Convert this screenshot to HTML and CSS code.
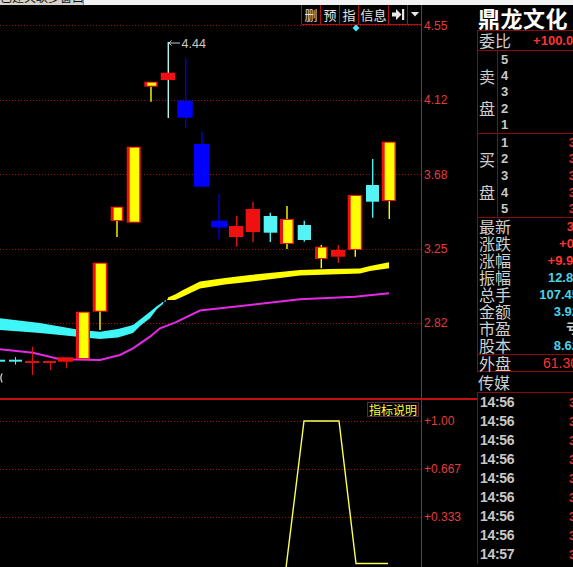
FILE: index.html
```html
<!DOCTYPE html>
<html lang="zh-CN">
<head>
<meta charset="utf-8">
<title>鼎龙文化</title>
<link rel="stylesheet" href="styles.css">
</head>
<body>
<div class="topstrip">
  <div class="tab"><span>已建关联多窗口</span></div>
</div>
<div class="main">
  <div class="chartcol">
    <div class="pricearea">
      <div class="plot">
        <svg class="canvas" width="421" height="393" viewBox="0 5 421 393" xmlns="http://www.w3.org/2000/svg">
          <g class="grid">
            <line x1="0" y1="25.5" x2="421" y2="25.5"/>
            <line x1="0" y1="100.5" x2="421" y2="100.5"/>
            <line x1="0" y1="174.5" x2="421" y2="174.5"/>
            <line x1="0" y1="249.5" x2="421" y2="249.5"/>
            <line x1="0" y1="323.5" x2="421" y2="323.5"/>
          </g>
          <!-- moving averages -->
          <polygon fill="#3ff6f6" points="0,318.3 40,323 80,330 100,331.7 118,329 133,325 142,318 150,311.7 157,306 163,302 163,304 157,309 150,318.3 140,326 133,333 118,337.5 100,339 80,337 40,333 0,330"/>
          <polyline fill="none" stroke="#3ff6f6" stroke-width="1.2" stroke-dasharray="1.5 1.5" points="162,303 170,298"/>
          <polygon fill="#ffff00" points="168,297.5 175,294.5 183,290 200,281.5 225,278 250,275 300,270 330,269 360,268.5 370,266 389,262.3 389,268.3 370,271 360,273.5 330,274.5 300,275.5 250,281.7 225,284.5 200,288.5 183,296.5 175,300 168,300"/>
          <polyline fill="none" stroke="#e52ae5" stroke-width="2" points="0,349.3 33,352.7 60,359.3 100,360 120,355 133,348.3 150,336.7 160,328.3 175,322.7 200,310.5 250,305 300,299.3 355,296.7 389,293.3"/>
          <!-- early small candles -->
          <g stroke-width="2">
            <line x1="0" y1="360.7" x2="5" y2="360.7" stroke="#4af0f0"/>
            <line x1="9" y1="360.7" x2="22" y2="360.7" stroke="#4af0f0"/>
            <line x1="15.5" y1="357" x2="15.5" y2="364.5" stroke="#4af0f0" stroke-width="1"/>
            <line x1="25" y1="362" x2="39" y2="362" stroke="#e01010"/>
            <line x1="32.5" y1="346.7" x2="32.5" y2="375" stroke="#e01010" stroke-width="1"/>
            <line x1="43" y1="362" x2="56" y2="362" stroke="#e01010"/>
            <line x1="50.5" y1="362" x2="50.5" y2="370" stroke="#e01010" stroke-width="1"/>
            <line x1="66.5" y1="361" x2="66.5" y2="368.3" stroke="#e01010" stroke-width="1"/>
          </g>
          <rect x="58" y="357.3" width="15" height="4.4" fill="#f01010"/>
          <path d="M2.2 373.5 Q-0.5 378 2.2 382.5" fill="none" stroke="#d8d8d8" stroke-width="1.2"/>
          <!-- wicks -->
          <g stroke-width="1.4">
            <line x1="100" y1="311" x2="100" y2="330" stroke="#ffff00"/>
            <line x1="117" y1="221" x2="117" y2="237" stroke="#ffff00"/>
            <line x1="151" y1="86.7" x2="151" y2="101.7" stroke="#ffff00"/>
            <line x1="168.3" y1="42" x2="168.3" y2="118" stroke="#b0f4f4"/>
            <line x1="185.7" y1="58" x2="185.7" y2="128" stroke="#0000d8"/>
            <line x1="202" y1="131.7" x2="202" y2="144" stroke="#0000d8"/>
            <line x1="219" y1="194" x2="219" y2="239.3" stroke="#0000d8"/>
            <line x1="236.7" y1="216" x2="236.7" y2="246.7" stroke="#e01010"/>
            <line x1="253" y1="201.7" x2="253" y2="242.3" stroke="#e01010"/>
            <line x1="270.3" y1="212.7" x2="270.3" y2="242" stroke="#4af0f0"/>
            <line x1="287" y1="206" x2="287" y2="249" stroke="#ffff00"/>
            <line x1="304.3" y1="220.7" x2="304.3" y2="241.7" stroke="#4af0f0"/>
            <line x1="321.3" y1="245" x2="321.3" y2="268.3" stroke="#ffff00"/>
            <line x1="338.3" y1="245" x2="338.3" y2="262.7" stroke="#e01010"/>
            <line x1="355.3" y1="250" x2="355.3" y2="256.7" stroke="#ffff00"/>
            <line x1="372.7" y1="159" x2="372.7" y2="217.7" stroke="#4af0f0"/>
            <line x1="389.3" y1="201" x2="389.3" y2="219" stroke="#ffff00"/>
          </g>
          <!-- rising candles: red frame, yellow fill -->
          <g class="up">
            <rect x="76" y="311.7" width="14" height="47.3"/>
            <rect x="92.7" y="262.7" width="14.6" height="49"/>
            <rect x="110.7" y="206.7" width="12.6" height="14.3"/>
            <rect x="126.7" y="146.7" width="14" height="76"/>
            <rect x="144.3" y="81.7" width="13.4" height="5"/>
            <rect x="280" y="219" width="14" height="25"/>
            <rect x="315" y="246.7" width="12.7" height="12.3"/>
            <rect x="347.7" y="195" width="14.6" height="55"/>
            <rect x="381.7" y="141.7" width="14.3" height="59.3"/>
          </g>
          <g class="upfill">
            <rect x="79" y="312.7" width="9.5" height="45.3"/>
            <rect x="95.7" y="263.7" width="10.1" height="47"/>
            <rect x="113.7" y="207.7" width="8.1" height="12.3"/>
            <rect x="129.7" y="147.7" width="9.5" height="74"/>
            <rect x="147.3" y="82.7" width="8.9" height="3"/>
            <rect x="283" y="220" width="9.5" height="23"/>
            <rect x="318" y="247.7" width="8.2" height="10.3"/>
            <rect x="350.7" y="196" width="10.1" height="53"/>
            <rect x="384.7" y="142.7" width="9.8" height="57.3"/>
          </g>
          <g fill="#f01010">
            <rect x="160.7" y="72.7" width="14.3" height="7.3"/>
            <rect x="229" y="226" width="14.3" height="11"/>
            <rect x="245.7" y="209" width="14.3" height="23"/>
            <rect x="331" y="250" width="14.3" height="6.7"/>
          </g>
          <g fill="#0000ff">
            <rect x="177.3" y="100.7" width="15.4" height="17"/>
            <rect x="194" y="144" width="15.3" height="42.7"/>
            <rect x="211" y="220.7" width="16" height="6.8"/>
          </g>
          <g fill="#55f2f6">
            <rect x="263.7" y="216" width="13.6" height="16.7"/>
            <rect x="297.7" y="225" width="13.3" height="15"/>
            <rect x="366" y="185" width="13" height="16.7"/>
          </g>
          <!-- high marker -->
          <polyline fill="none" stroke="#c8c8c8" stroke-width="1" points="171.5,40.5 169,43 171.5,45.5"/>
          <line x1="169" y1="43" x2="180" y2="43" stroke="#c8c8c8" stroke-width="1"/>
          <text x="181.5" y="47.5" class="hi">4.44</text>
          <polygon points="356,24.5 359.5,28 356,31.5 352.5,28" fill="#45e6f6"/>
        </svg>
        <div class="toolbar">
          <button class="btn">删</button>
          <button class="btn">预</button>
          <button class="btn">指</button>
          <button class="btn wide">信息</button>
          <button class="btn">
            <svg width="13" height="11" viewBox="0 0 13 11" xmlns="http://www.w3.org/2000/svg"><path d="M0 3.5h4V0l5.5 5.5L4 11V7.5H0z" fill="#e8e8e8"/><rect x="10" y="0" width="2.2" height="11" fill="#e8e8e8"/></svg>
          </button>
          <button class="btn narrow">
            <svg width="8" height="5" viewBox="0 0 8 5" xmlns="http://www.w3.org/2000/svg"><path d="M0 0h8L4 4.5z" fill="#e8e8e8"/></svg>
          </button>
        </div>
      </div>
      <div class="axis price">
        <div class="tick">4.55</div>
        <div class="tick">4.12</div>
        <div class="tick">3.68</div>
        <div class="tick">3.25</div>
        <div class="tick">2.82</div>
      </div>
    </div>
    <div class="indarea">
      <div class="plot">
        <svg class="canvas" width="421" height="167" viewBox="0 400 421 167" xmlns="http://www.w3.org/2000/svg">
          <g class="grid">
            <line x1="0" y1="421.5" x2="421" y2="421.5"/>
            <line x1="0" y1="469.5" x2="421" y2="469.5"/>
            <line x1="0" y1="517.5" x2="421" y2="517.5"/>
          </g>
          <polyline fill="none" stroke="#ffff50" stroke-width="1.4" points="286,568 304,421 339,421 356,563.5 388,563.5"/>
        </svg>
        <div class="legend">指标说明</div>
      </div>
      <div class="axis ind">
        <div class="tick">+1.00</div>
        <div class="tick">+0.667</div>
        <div class="tick">+0.333</div>
      </div>
    </div>
  </div>
  <aside class="side">
    <h1 class="title">鼎龙文化</h1>
    <div class="box">
      <div class="row ratio"><span class="lbl">委比</span><span class="val red">+100.00%</span></div>
      <div class="book sell">
        <div class="booklbl"><span class="c2">卖</span><span class="c4">盘</span></div>
        <ul class="levels"><li>5</li><li>4</li><li>3</li><li>2</li><li>1</li></ul>
      </div>
      <div class="book buy">
        <div class="booklbl"><span class="c2">买</span><span class="c4">盘</span></div>
        <ul class="levels">
          <li>1<span class="lv">3.64</span></li>
          <li>2<span class="lv">3.63</span></li>
          <li>3<span class="lv">3.62</span></li>
          <li>4<span class="lv">3.61</span></li>
          <li>5<span class="lv">3.60</span></li>
        </ul>
      </div>
      <div class="row"><span class="lbl">最新</span><span class="val red">3.64</span></div>
      <div class="row"><span class="lbl">涨跌</span><span class="val red">+0.33</span></div>
      <div class="row"><span class="lbl">涨幅</span><span class="val red">+9.97%</span></div>
      <div class="row"><span class="lbl">振幅</span><span class="val cyan">12.87%</span></div>
      <div class="row"><span class="lbl">总手</span><span class="val cyan">107.45万</span></div>
      <div class="row"><span class="lbl">金额</span><span class="val cyan">3.92亿</span></div>
      <div class="row"><span class="lbl">市盈</span><span class="val gray">亏损</span></div>
      <div class="row"><span class="lbl">股本</span><span class="val cyan">8.62亿</span></div>
      <div class="row outer"><span class="lbl">外盘</span><span class="val red thin">61.30万</span></div>
    </div>
    <div class="sector">传媒</div>
    <ul class="ticks">
      <li><span class="t">14:56</span><span class="p">3.64</span></li>
      <li><span class="t">14:56</span><span class="p">3.64</span></li>
      <li><span class="t">14:56</span><span class="p">3.64</span></li>
      <li><span class="t">14:56</span><span class="p">3.64</span></li>
      <li><span class="t">14:56</span><span class="p">3.64</span></li>
      <li><span class="t">14:56</span><span class="p">3.64</span></li>
      <li><span class="t">14:56</span><span class="p">3.64</span></li>
      <li><span class="t">14:56</span><span class="p">3.64</span></li>
      <li><span class="t">14:57</span><span class="p">3.64</span></li>
    </ul>
  </aside>
</div>
</body>
</html>
```

FILE: styles.css
```css
* { box-sizing: border-box; margin: 0; padding: 0; }

html, body {
  width: 573px;
  height: 567px;
  overflow: hidden;
  background: #000;
}

body {
  font-family: "Liberation Sans", "Noto Sans CJK SC", sans-serif;
  color: #c8c8c8;
}

ul { list-style: none; }

/* thin window strip at the very top */
.topstrip {
  height: 5px;
  background: #f2f2f2;
  display: flex;
  overflow: hidden;
}
.topstrip .tab {
  width: 84px;
  height: 5px;
  overflow: hidden;
  background: #d6d2ca;
  border-right: 1px solid #8a8a8a;
}
.topstrip .tab span {
  display: block;
  margin-top: -10px;
  font: 12px/14px "Noto Sans CJK SC", sans-serif;
  color: #111;
  white-space: nowrap;
}

.main {
  display: flex;
  height: 562px;
}

.chartcol {
  width: 477px;
  flex: none;
  display: flex;
  flex-direction: column;
}

.pricearea {
  height: 395px;
  display: flex;
  border-bottom: 2px solid #c41010;
}

.indarea {
  flex: 1;
  display: flex;
}

.plot {
  width: 422px;
  flex: none;
  position: relative;
  border-right: 1px solid #c81414;
}

.canvas { display: block; }

.grid line {
  stroke: #9a0c0c;
  stroke-width: 1;
  stroke-dasharray: 1 2;
}

.up rect { fill: #f01010; }
.upfill rect { fill: #ffff00; }

.hi {
  font-family: "Liberation Sans", sans-serif;
  font-size: 12.5px;
  fill: #c8c8c8;
}

/* toolbar over the chart's top-right corner */
.toolbar {
  position: absolute;
  top: 0;
  right: 0;
  display: flex;
  height: 20px;
}
.btn {
  width: 19px;
  height: 20px;
  background: #000;
  border: 0;
  border-left: 1px solid #b01010;
  border-bottom: 1px solid #b01010;
  color: #e4e4e4;
  font: 13px/19px "Noto Sans CJK SC", sans-serif;
  display: flex;
  align-items: center;
  justify-content: center;
  padding: 0;
}
.btn.wide { width: 30px; }
.btn.narrow { width: 14px; }

.legend {
  position: absolute;
  top: 2px;
  right: 2px;
  height: 15px;
  padding: 0 1px;
  border: 1px solid #5a2848;
  color: #ffff30;
  font: 12px/13px "Noto Sans CJK SC", sans-serif;
  background: #000;
}

/* axes */
.axis {
  flex: 1;
  padding-left: 2px;
  padding-top: 14px;
  color: #e43c3c;
  font-size: 12px;
}
.axis .tick { line-height: 14px; }
.axis.price .tick { height: 74.33px; }
.axis.ind .tick { height: 48px; }

/* right-hand quote panel */
.side {
  width: 130px;
  flex: none;
  color: #c8c8c8;
}

.title {
  height: 25px;
  padding-left: 1px;
  font: bold 22px/25px "Noto Sans CJK SC", sans-serif;
  color: #fff;
  white-space: nowrap;
  letter-spacing: 0.5px;
}

.box {
  border-left: 1px solid #8c0a0a;
  border-top: 1px solid #8c0a0a;
  border-bottom: 1px solid #8c0a0a;
}

.row {
  display: flex;
  justify-content: space-between;
  align-items: center;
  height: 17px;
  padding-right: 15px;
}
.row.ratio {
  height: 20px;
  border-bottom: 1px solid #8c0a0a;
}
.row.outer {
  height: 17px;
  border-top: 1px solid #8c0a0a;
}

.lbl {
  padding-left: 1px;
  font: 16px/17px "Noto Sans CJK SC", sans-serif;
  color: #cfcfcf;
  white-space: nowrap;
}

.val {
  font: bold 13px/17px "Liberation Sans", "Noto Sans CJK SC", sans-serif;
  white-space: nowrap;
}
.val.thin { font-weight: normal; font-size: 14px; }
.red { color: #ff3232; }
.cyan { color: #4ad2e6; }
.gray { color: #c8c8c8; }

.book {
  display: grid;
  grid-template-columns: 20px 1fr;
  border-bottom: 1px solid #8c0a0a;
}
.book.sell { height: 83px; }
.book.buy { height: 84px; }

.booklbl {
  display: grid;
  grid-template-rows: repeat(5, 1fr);
  border-right: 1px solid #8c0a0a;
  font: 16px/16px "Noto Sans CJK SC", sans-serif;
  color: #cfcfcf;
}
.booklbl span {
  display: flex;
  align-items: center;
  padding-left: 1px;
}
.booklbl .c2 { grid-row: 2; }
.booklbl .c4 { grid-row: 4; }

.levels {
  display: grid;
  grid-template-rows: repeat(5, 1fr);
}
.levels li {
  display: flex;
  align-items: center;
  justify-content: space-between;
  padding-left: 3px;
  padding-right: 13px;
  font: bold 13px/13px "Liberation Sans", sans-serif;
  color: #c8c8c8;
}
.levels .lv { color: #e03030; }

.sector {
  height: 20px;
  padding-left: 1px;
  font: 16px/20px "Noto Sans CJK SC", sans-serif;
  color: #cfcfcf;
}

.ticks {
  border-top: 1px solid #8c0a0a;
  border-left: 1px solid #8c0a0a;
}
.ticks li {
  display: flex;
  align-items: center;
  height: 19px;
}
.ticks .t {
  width: 91px;
  padding-left: 2px;
  font: bold 14px/19px "Liberation Sans", sans-serif;
  letter-spacing: -0.3px;
  color: #c8c8c8;
}
.ticks .p {
  font: bold 13px/19px "Liberation Sans", sans-serif;
  color: #e03030;
}
```
